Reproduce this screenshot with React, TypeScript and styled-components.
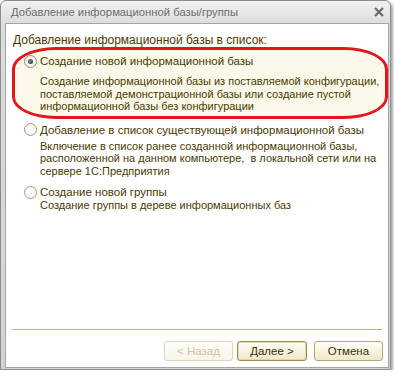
import React from 'react';
import styled, { createGlobalStyle, css } from 'styled-components';

const Global = createGlobalStyle`
  html, body { margin: 0; padding: 0; background: #ffffff; }
  body { font-family: "Liberation Sans", Arial, sans-serif; }
`;

const Window = styled.div`
  width: 391px;
  height: 370px;
  box-sizing: border-box;
  display: flex;
  flex-direction: column;
  border: 1px solid #8c8c8c;
  border-radius: 6px 6px 0 0;
  background: linear-gradient(to bottom, #f1f1f1 0, #dcdcdc 24px, #d3d3d3 100%);
  box-shadow: 2px 2px 3px rgba(0, 0, 0, 0.35);
  padding: 0 1px 1px 4px;
`;

const TitleBar = styled.div`
  height: 22px;
  display: flex;
  align-items: center;
  justify-content: space-between;
  padding: 0 5px 0 6px;
`;

const Title = styled.span`
  font-size: 11.25px;
  color: #6d6d6d;
`;

const CloseIcon = () => (
  <svg width="10" height="10" viewBox="0 0 10 10">
    <path d="M1 1 L9 9 M9 1 L1 9" stroke="#6b6b6b" strokeWidth="2.2" />
  </svg>
);

const Content = styled.div`
  flex: 1;
  display: flex;
  flex-direction: column;
  background: #ffffff;
  border: 1px solid #a3a3a3;
  padding: 9px 0 6px 0;
  color: #4a3a00;
  font-size: 11px;
  white-space: nowrap;
`;

const Heading = styled.div`
  line-height: 14px;
  margin-left: 7px;
  font-size: 12px;
`;

const Options = styled.div`
  display: flex;
  flex-direction: column;
  margin-left: 6px;
`;

const Option = styled.div<{ $selected?: boolean; $top?: number }>`
  display: flex;
  flex-direction: column;
  margin-top: ${(p) => p.$top ?? 0}px;
  padding: 0 0 0 12px;
  ${(p) =>
    p.$selected &&
    css`
      border: 3px solid #e5151c;
      border-radius: 44px / 22px;
      background: #fbf9ea;
      padding: 4px 6px 3px 9px;
    `}
`;

const OptionRow = styled.label`
  display: flex;
  align-items: center;
  gap: 3px;
  line-height: 14px;
  font-size: 11.5px;
`;

const Radio = styled.span<{ $checked?: boolean }>`
  position: relative;
  flex: none;
  width: 13px;
  height: 13px;
  box-sizing: border-box;
  border-radius: 50%;
  border: 1px solid ${(p) => (p.$checked ? '#8f8d84' : '#a39e80')};
  background: radial-gradient(circle at 50% 50%, #ffffff 30%, #ecebe4 100%);
  ${(p) =>
    p.$checked &&
    css`
      &::after {
        content: '';
        position: absolute;
        left: 3px;
        top: 3px;
        width: 5px;
        height: 5px;
        border-radius: 50%;
        background: radial-gradient(circle at 40% 40%, #8a8a8a, #222222);
      }
    `}
`;

const Description = styled.div<{ $top: number }>`
  margin: ${(p) => p.$top}px 0 0 16px;
  line-height: 12.5px;
`;

const Separator = styled.div`
  margin: auto 6px 0 6px;
  height: 1px;
  background: #bcb088;
`;

const Footer = styled.div`
  display: flex;
  justify-content: flex-end;
  gap: 4px;
  padding: 11px 5px 0 0;
`;

const Button = styled.button<{ $default?: boolean; $space?: number }>`
  height: 20px;
  width: ${(p) => (p.$default ? 70 : 69)}px;
  box-sizing: border-box;
  margin-left: ${(p) => p.$space ?? 0}px;
  padding: 0;
  border: 1px solid #b5a871;
  border-radius: 3px;
  background: linear-gradient(to bottom, #fffef8 0, #f6f2df 55%, #eee8cc 100%);
  font-family: "Liberation Sans", Arial, sans-serif;
  font-size: 11.5px;
  color: #3d2f00;
  ${(p) =>
    p.$default &&
    css`
      border-color: #9c8d55;
      box-shadow: inset 0 0 0 1px #e3d8a6;
    `}
  &:disabled {
    color: #cbc3a2;
    border-color: #ddd5b6;
    background: linear-gradient(to bottom, #fffefa 0, #f8f5e8 100%);
  }
`;

export default function App() {
  return (
    <>
      <Global />
      <Window>
        <TitleBar>
          <Title>Добавление информационной базы/группы</Title>
          <CloseIcon />
        </TitleBar>
        <Content>
          <Heading>Добавление информационной базы в список:</Heading>
          <Options>
            <Option $selected>
              <OptionRow>
                <Radio $checked />
                Создание новой информационной базы
              </OptionRow>
              <Description $top={7}>
                Создание информационной базы из поставляемой конфигурации,
                <br />
                поставляемой демонстрационной базы или создание пустой
                <br />
                информационной базы без конфигурации
              </Description>
            </Option>
            <Option $top={4}>
              <OptionRow>
                <Radio />
                Добавление в список существующей информационной базы
              </OptionRow>
              <Description $top={3}>
                Включение в список ранее созданной информационной базы,
                <br />
                расположенной на данном компьютере,&nbsp; в локальной сети или на
                <br />
                сервере 1С:Предприятия
              </Description>
            </Option>
            <Option $top={8}>
              <OptionRow>
                <Radio />
                Создание новой группы
              </OptionRow>
              <Description $top={0}>Создание группы в дереве информационных баз</Description>
            </Option>
          </Options>
          <Separator />
          <Footer>
            <Button disabled>&lt; Назад</Button>
            <Button $default>Далее &gt;</Button>
            <Button $space={3}>Отмена</Button>
          </Footer>
        </Content>
      </Window>
    </>
  );
}
